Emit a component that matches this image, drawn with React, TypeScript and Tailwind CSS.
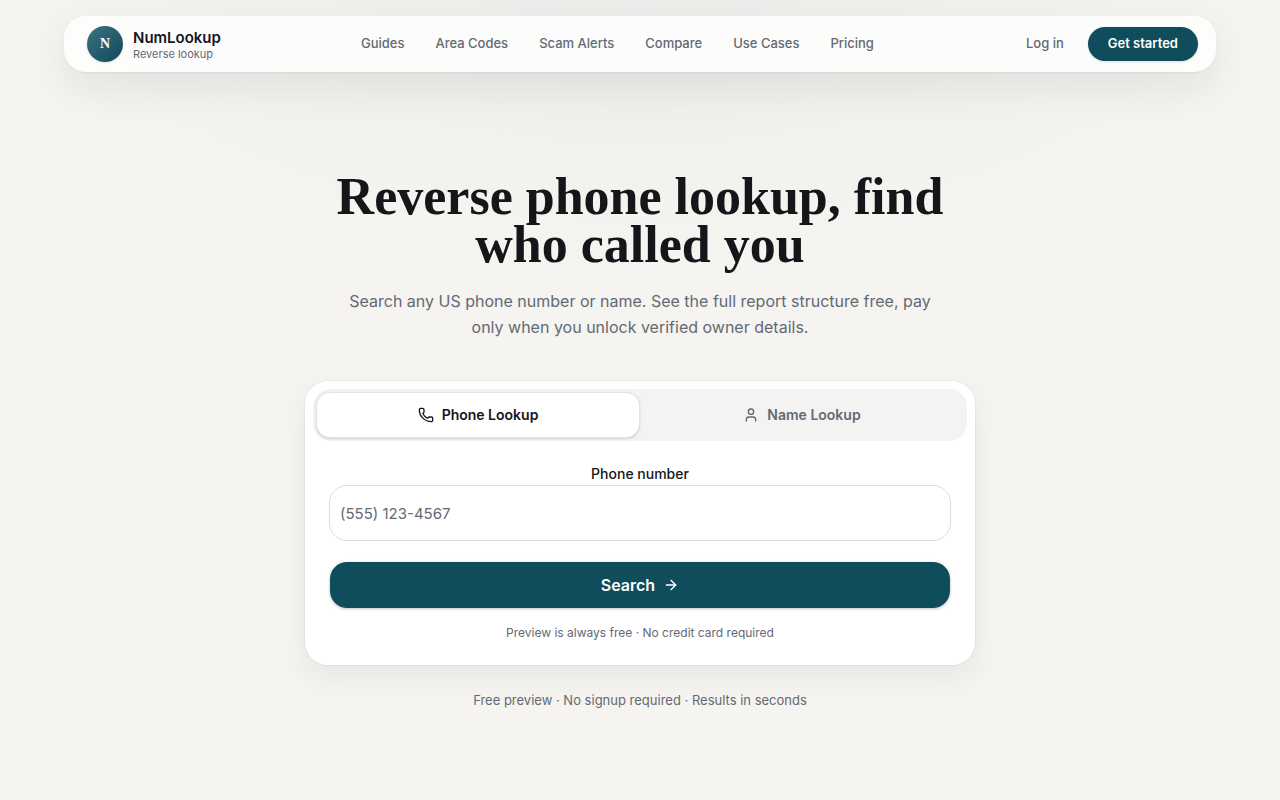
import { useState } from "react";
import { ArrowRight, Phone, User } from "lucide-react";

const navLinks = ["Guides", "Area Codes", "Scam Alerts", "Compare", "Use Cases", "Pricing"];

function Navbar() {
  return (
    <header className="px-16 pt-4">
      <div className="flex h-14 items-center justify-between rounded-[22px] bg-white/80 pl-[23px] pr-[18px] shadow-[0_1px_2px_rgba(20,25,30,0.06),0_16px_40px_rgba(20,25,30,0.08)]">
        <a href="#" className="flex items-center gap-2.5">
          <span className="flex size-9 items-center justify-center rounded-full bg-linear-to-br from-[#3b7280] to-[#0e4a5a] font-['Liberation_Serif',serif] text-sm font-bold text-white shadow-sm">
            N
          </span>
          <span className="flex flex-col pt-0.5">
            <span className="text-[15px] leading-[18px] font-semibold text-[#14161a]">NumLookup</span>
            <span className="text-[11px] leading-[14px] text-[#646973]">Reverse lookup</span>
          </span>
        </a>

        <nav className="flex items-center gap-[31px] text-[13px] font-medium text-[#646973]">
          {navLinks.map((label) => (
            <a key={label} href="#">
              {label}
            </a>
          ))}
        </nav>

        <div className="flex items-center gap-3 text-[13px]">
          <a href="#" className="px-3 font-medium text-[#646973]">
            Log in
          </a>
          <a href="#" className="flex h-[34px] items-center rounded-full bg-[#0f4c5c] px-5 font-semibold text-white shadow-sm">
            Get started
          </a>
        </div>
      </div>
    </header>
  );
}

function SearchCard() {
  const [mode, setMode] = useState("phone");
  const tabs = [
    { id: "phone", label: "Phone Lookup", icon: Phone },
    { id: "name", label: "Name Lookup", icon: User },
  ];

  return (
    <div className="w-full max-w-2xl rounded-3xl border border-black/4 bg-white bg-clip-padding p-2 shadow-[0_12px_32px_rgba(20,25,30,0.06)]">
      <div role="tablist" className="grid h-[52px] grid-cols-2 rounded-[18px] bg-[#f4f3f2] p-[3px]">
        {tabs.map(({ id, label, icon: Icon }) => (
          <button
            key={id}
            type="button"
            role="tab"
            aria-selected={mode === id}
            onClick={() => setMode(id)}
            className={
              mode === id
                ? "flex items-center justify-center gap-2 rounded-[14px] border border-[#e4e4e3] bg-white text-sm font-semibold text-[#14161a] shadow-sm"
                : "flex items-center justify-center gap-2 rounded-[14px] border border-transparent text-sm font-semibold text-[#646973]"
            }
          >
            <Icon className="size-4" />
            {label}
          </button>
        ))}
      </div>

      <form className="mt-2 flex flex-col p-4" onSubmit={(e) => e.preventDefault()}>
        <label htmlFor="lookup" className="mb-0.5 text-center text-sm leading-[18px] font-medium text-[#14161a]">
          {mode === "phone" ? "Phone number" : "Full name"}
        </label>
        <input
          id="lookup"
          type="text"
          placeholder={mode === "phone" ? "(555) 123-4567" : "Jane Doe"}
          className="h-14 w-full rounded-[18px] border border-[#dcdcdb] bg-white px-2.5 text-[15px] text-[#14161a] placeholder:text-[#646973]"
        />
        <button
          type="submit"
          className="mt-5 flex h-12 items-center justify-center gap-2 rounded-[18px] border border-transparent bg-[#0f4c5c] bg-clip-padding text-base font-semibold text-white shadow-sm"
        >
          Search
          <ArrowRight className="size-4" />
        </button>
        <p className="mt-4 text-center text-xs text-[#646973]">Preview is always free · No credit card required</p>
      </form>
    </div>
  );
}

export default function App() {
  return (
    <main className="min-h-screen bg-[#f5f4f0] bg-[radial-gradient(ellipse_640px_260px_at_50%_0%,rgba(15,76,92,0.04),transparent)] font-[Inter,sans-serif]">
      <Navbar />

      <section className="flex flex-col items-center px-6 pt-[101px] pb-20 text-center">
        <h1 className="max-w-2xl font-['Liberation_Serif',serif] text-[52px] leading-12 font-bold text-[#14161a]">
          Reverse phone lookup, find who called you
        </h1>
        <p className="mt-[19px] mb-10 max-w-[600px] text-base leading-[26px] text-[#646973]">
          Search any US phone number or name. See the full report structure free, pay only when you unlock verified owner
          details.
        </p>
        <SearchCard />
        <p className="mt-6 text-[13px] leading-5 text-[#646973]">Free preview · No signup required · Results in seconds</p>
      </section>
    </main>
  );
}
